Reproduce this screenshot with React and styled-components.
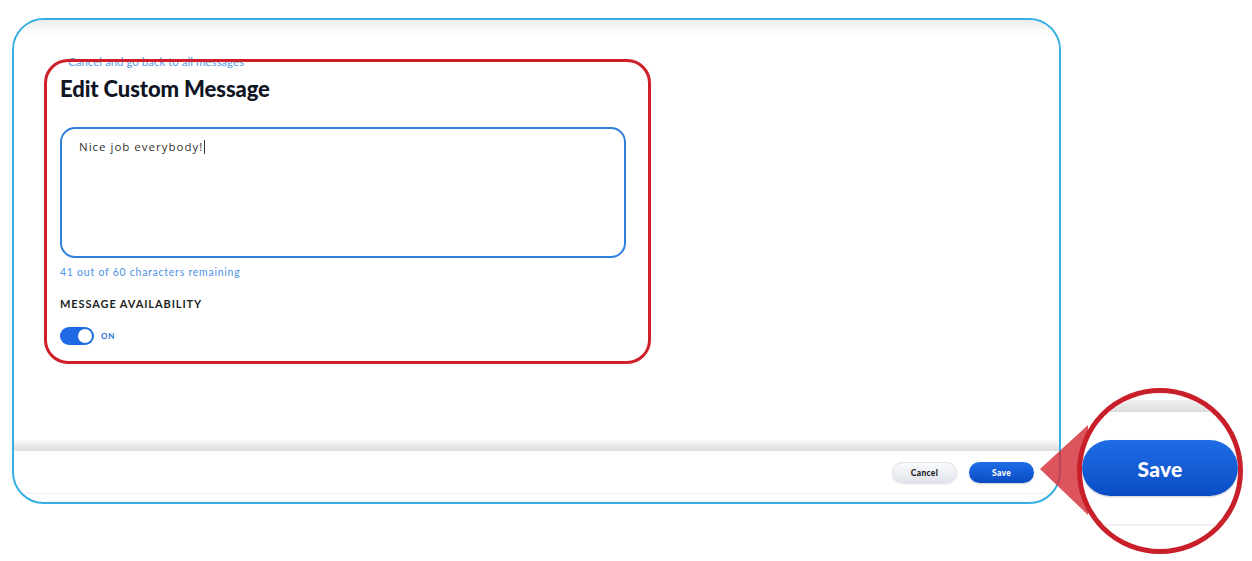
import React from "react";
import styled, { createGlobalStyle } from "styled-components";

const Global = createGlobalStyle`
  html, body { margin: 0; padding: 0; background: #ffffff; }
  body { font-family: Lato, "Noto Sans", sans-serif; }
  * { box-sizing: border-box; }
`;

const Page = styled.div`
  position: relative;
  width: 1252px;
  height: 561px;
  padding: 18px 0 0 12px;
  overflow: hidden;
`;

const Frame = styled.div`
  position: relative;
  width: 1049px;
  height: 486px;
  border: 2px solid #35aee2;
  border-radius: 32px;
  overflow: hidden;
  display: flex;
  flex-direction: column;
  background: #fff;
`;

const Body = styled.div`
  position: relative;
  flex: 1;
  background: linear-gradient(#ededed 0px, #fafafa 10px, #ffffff 18px);
  padding: 35px 0 0 46px;
`;

const BackLink = styled.a`
  display: block;
  margin-left: 8px;
  font-size: 11.5px;
  line-height: 14px;
  color: #5a9ce9;
  text-decoration: none;
`;

const Title = styled.h1`
  margin: 6px 0 0;
  font-size: 22px;
  line-height: 28px;
  font-weight: 900;
  color: #0f1523;
  letter-spacing: -0.1px;
`;

const TextBox = styled.div`
  margin-top: 24px;
  width: 566px;
  height: 131px;
  border: 2px solid #2f7fdc;
  border-radius: 15px;
  padding: 9px 17px;
  font-family: "Open Sans", sans-serif;
  font-size: 11.5px;
  letter-spacing: 1px;
  color: #333;
  line-height: 18px;
`;

const Caret = styled.span`
  display: inline-block;
  width: 1px;
  height: 14px;
  background: #333;
  vertical-align: -3px;
  margin-left: 1px;
`;

const Counter = styled.div`
  margin-top: 7px;
  font-size: 10.5px;
  letter-spacing: 0.75px;
  color: #4d92e4;
  line-height: 14px;
`;

const Label = styled.div`
  margin-top: 18px;
  font-size: 11px;
  font-weight: 700;
  letter-spacing: 0.9px;
  color: #1c1f26;
  line-height: 14px;
`;

const ToggleRow = styled.div`
  margin-top: 16px;
  display: flex;
  align-items: center;
  gap: 7px;
`;

const Switch = styled.div`
  width: 34px;
  height: 18px;
  border-radius: 9px;
  background: #1d6ae2;
  position: relative;
  &::after {
    content: "";
    position: absolute;
    right: 2px;
    top: 2px;
    width: 14px;
    height: 14px;
    border-radius: 50%;
    background: #fff;
  }
`;

const SwitchText = styled.span`
  font-size: 8px;
  font-weight: 700;
  letter-spacing: 0.8px;
  color: #2a6fd8;
`;

const Highlight = styled.div`
  position: absolute;
  left: 30px;
  top: 39px;
  width: 607px;
  height: 305px;
  border: 3px solid #cf1f2a;
  border-radius: 24px;
  pointer-events: none;
`;

const Band = styled.div`
  flex: none;
  height: 11px;
  background: linear-gradient(#fbfbfb, #e4e4e4 70%, #dcdcdc);
`;

const Footer = styled.div`
  flex: none;
  height: 43px;
  display: flex;
  justify-content: flex-end;
  align-items: flex-start;
  gap: 12px;
  padding: 11px 25px 0 0;
  border-bottom: 1px solid #eef0f2;
`;

const Spacer = styled.div`
  flex: none;
  height: 8px;
`;

const Btn = styled.button`
  width: ${(p) => p.$w || 65}px;
  height: ${(p) => p.$h || 21}px;
  border-radius: ${(p) => (p.$h || 21) / 2}px;
  font-family: Lato, sans-serif;
  font-weight: 900;
  font-size: ${(p) => p.$fs || 8.5}px;
  cursor: pointer;
  padding: 0;
  letter-spacing: 0.3px;
  ${(p) =>
    p.$primary
      ? `
    background: linear-gradient(#1f6de6, #0a4cc4);
    color: #fff;
    border: none;
    box-shadow: 0 1px 2px rgba(0,0,0,0.2);
  `
      : `
    background: linear-gradient(#fafbfd, #e2e4ec);
    color: #1a1d24;
    border: 1px solid #dde0e6;
    box-shadow: 0 1px 2px rgba(0,0,0,0.12);
  `}
`;

const Pointer = styled.svg`
  position: absolute;
  left: 1038px;
  top: 420px;
`;

const Magnifier = styled.div`
  position: absolute;
  left: 1077px;
  top: 388px;
  width: 166px;
  height: 166px;
  border-radius: 50%;
  border: 5px solid #c81f2a;
  background: #fff;
  overflow: hidden;
  display: flex;
  flex-direction: column;
  align-items: center;
`;

const MagBand = styled.div`
  width: 100%;
  margin-top: 7px;
  height: 12px;
  background: linear-gradient(#f2f2f2, #dcdcdc);
`;

const MagBtnWrap = styled.div`
  margin-top: 28px;
  width: 100%;
  display: flex;
  justify-content: center;
`;

const MagLine = styled.div`
  width: 100%;
  margin-top: 28px;
  height: 2px;
  background: #eceef1;
`;

export default function App() {
  return (
    <>
      <Global />
      <Page>
        <Frame>
          <Body>
            <BackLink href="#">Cancel and go back to all messages</BackLink>
            <Title>Edit Custom Message</Title>
            <TextBox>
              Nice job everybody!
              <Caret />
            </TextBox>
            <Counter>41 out of 60 characters remaining</Counter>
            <Label>MESSAGE AVAILABILITY</Label>
            <ToggleRow>
              <Switch />
              <SwitchText>ON</SwitchText>
            </ToggleRow>
            <Highlight />
          </Body>
          <Band />
          <Footer>
            <Btn>Cancel</Btn>
            <Btn $primary>Save</Btn>
          </Footer>
          <Spacer />
        </Frame>
        <Pointer width="60" height="100" viewBox="0 0 60 100">
          <polygon points="2,49 50,5 50,95" fill="rgba(212,48,56,0.82)" />
        </Pointer>
        <Magnifier>
          <MagBand />
          <MagBtnWrap>
            <Btn $primary $w={160} $h={56} $fs={21}>
              Save
            </Btn>
          </MagBtnWrap>
          <MagLine />
        </Magnifier>
      </Page>
    </>
  );
}
